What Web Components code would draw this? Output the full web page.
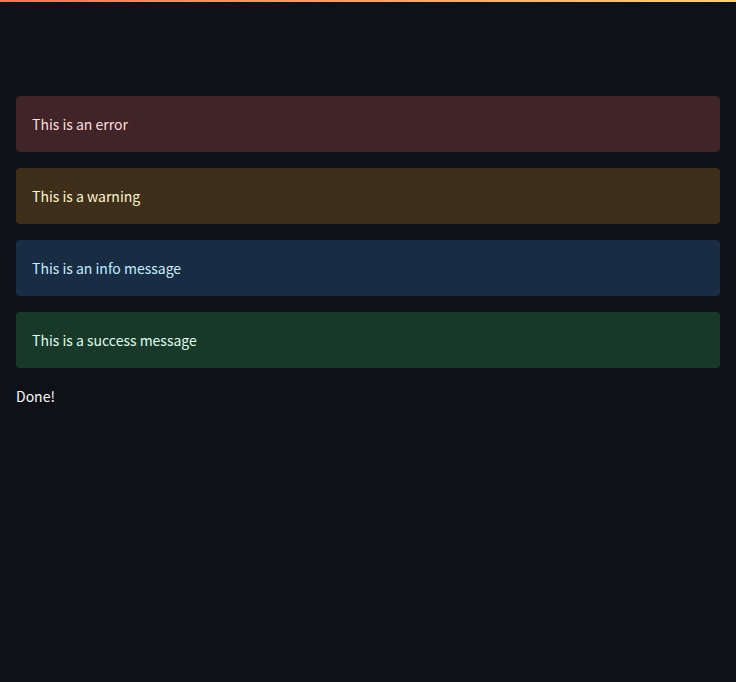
<!DOCTYPE html>
<html lang="en">
<head>
<meta charset="utf-8">
<title>Status messages</title>
<style>
html, body { margin: 0; min-height: 100vh; background: #0e1117; }
body { display: flex; flex-direction: column; }
</style>
</head>
<body>
<status-app></status-app>
<script>
class StatusAlert extends HTMLElement {
  constructor() {
    super();
    this.attachShadow({ mode: "open" }).innerHTML = `
<style>
:host { display: block; box-sizing: border-box; padding: 16px; border-radius: 4px; line-height: 24px; }
:host([kind="error"]) { background: #402428; color: #ffdede; }
:host([kind="warning"]) { background: #3e2f1b; color: #fff3cd; }
:host([kind="info"]) { background: #182d43; color: #c7ebff; }
:host([kind="success"]) { background: #183929; color: #dffde9; }
p { margin: 0; }
</style><p><slot></slot></p>`;
    this.setAttribute("role", "alert");
  }
}
class StatusApp extends HTMLElement {
  constructor() {
    super();
    this.attachShadow({ mode: "open" }).innerHTML = `
<style>
:host { flex: 1; display: flex; flex-direction: column; color: #fafafa; font: 14px/24px "Noto Sans CJK SC", "Noto Sans", sans-serif; }
.bar { height: 2px; background: linear-gradient(90deg, #ff705b, #ffd073); }
main { display: flex; flex-direction: column; gap: 16px; padding: 94px 16px 16px; }
p { margin: 0; }
</style>
<div class="bar"></div>
<main>
<status-alert kind="error">This is an error</status-alert>
<status-alert kind="warning">This is a warning</status-alert>
<status-alert kind="info">This is an info message</status-alert>
<status-alert kind="success">This is a success message</status-alert>
<p>Done!</p>
</main>`;
  }
}
customElements.define("status-alert", StatusAlert);
customElements.define("status-app", StatusApp);
</script>
</body>
</html>
